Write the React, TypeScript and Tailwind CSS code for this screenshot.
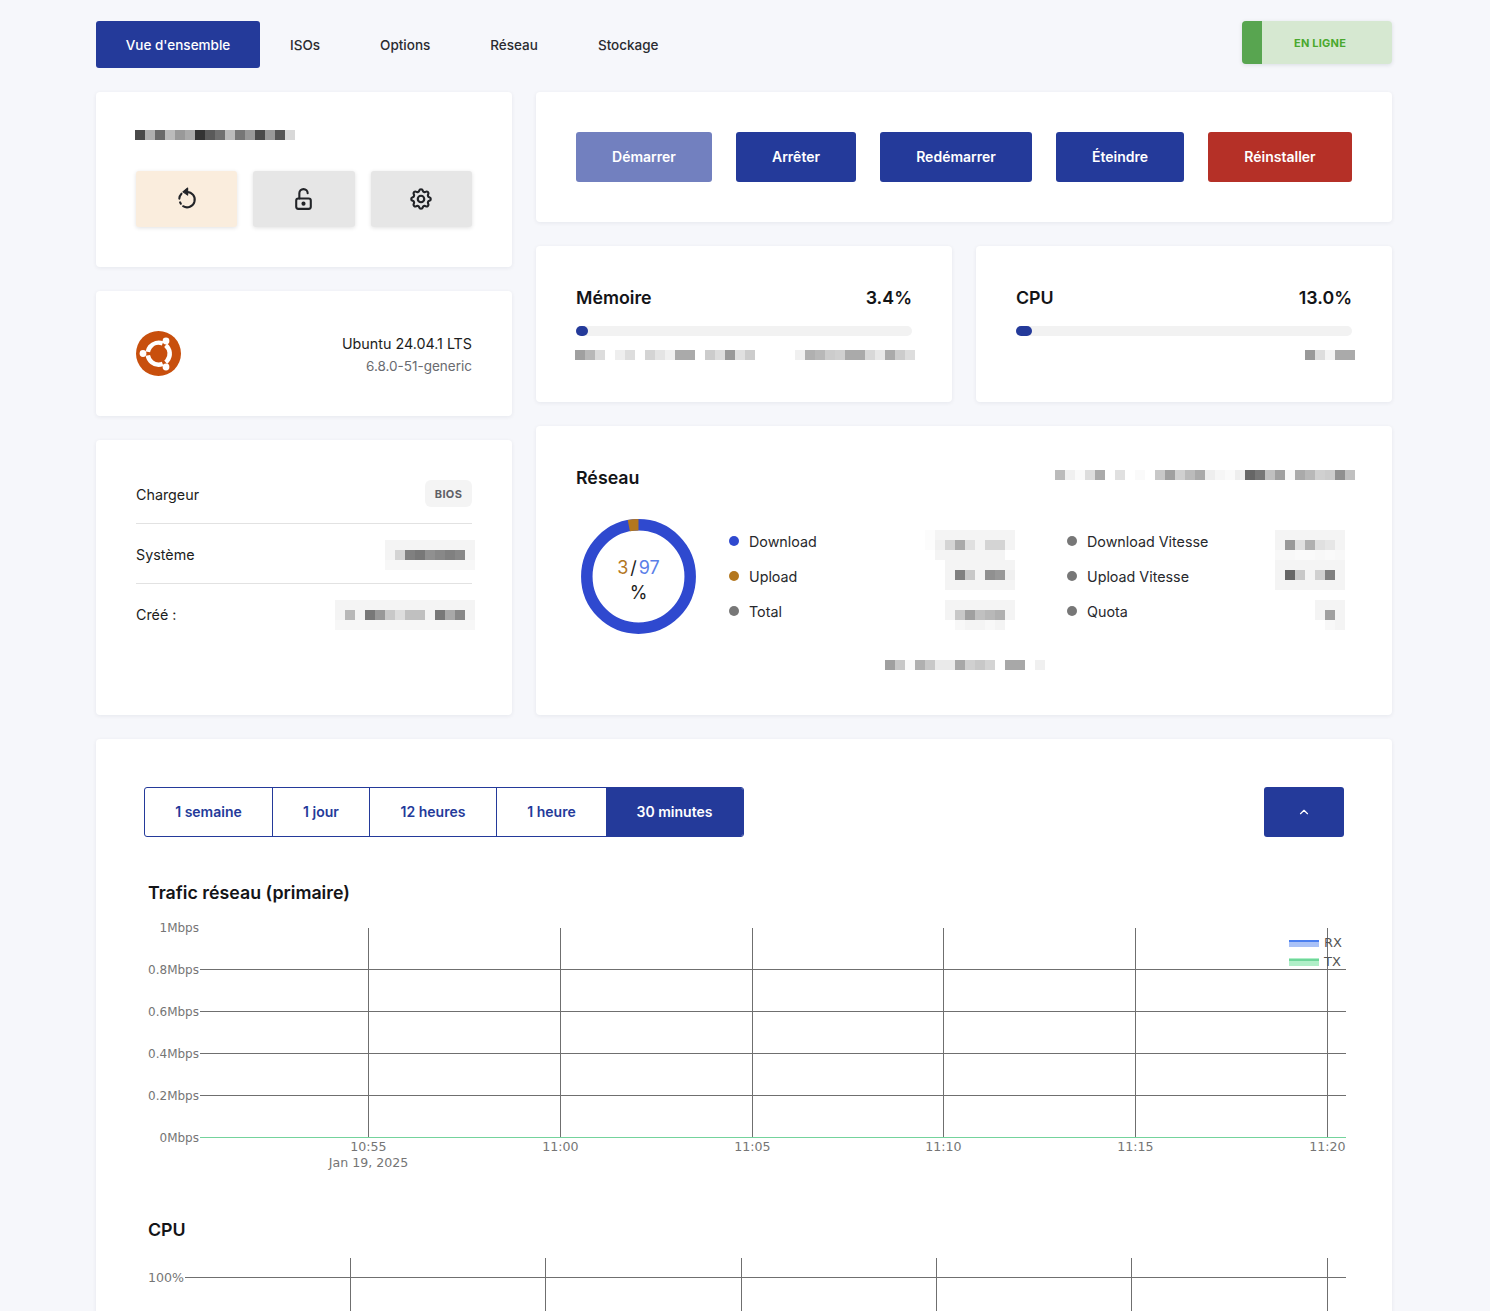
import { TbChevronUp, TbLockOpen, TbSettings } from "react-icons/tb";

// grey levels of the blurred-out values, one string per 10px row
const Mosaic = ({ rows, className = "" }: { rows: string[]; className?: string }) => (
  <div className={`flex flex-col shrink-0 ${className}`}>
    {rows.map((row, i) => (
      <div key={i} className="flex">
        {row.split(" ").map((level, j) => (
          <span key={j} className="h-2.5 w-2.5 shrink-0" style={{ backgroundColor: `#${level}${level}${level}` }} />
        ))}
      </div>
    ))}
  </div>
);

const Card = ({ className = "", children }: { className?: string; children: React.ReactNode }) => (
  <div className={`rounded-[4px] bg-white shadow-[0_1px_4px_rgba(20,30,60,0.07)] ${className}`}>{children}</div>
);

const tabs = ["ISOs", "Options", "Réseau", "Stockage"];

const actions = [
  { label: "Démarrer", cls: "w-[136px] bg-[#7280bf]" },
  { label: "Arrêter", cls: "w-[120px] bg-[#243a9a]" },
  { label: "Redémarrer", cls: "w-[152px] bg-[#243a9a]" },
  { label: "Éteindre", cls: "w-[128px] bg-[#243a9a]" },
  { label: "Réinstaller", cls: "w-[144px] bg-[#b53027]" },
];

const ranges = [
  { label: "1 semaine", cls: "w-[128px] border-r border-[#243a9a] text-[#243a9a]" },
  { label: "1 jour", cls: "w-[97px] border-r border-[#243a9a] text-[#243a9a]" },
  { label: "12 heures", cls: "w-[127px] border-r border-[#243a9a] text-[#243a9a]" },
  { label: "1 heure", cls: "w-[109px] text-[#243a9a]" },
  { label: "30 minutes", cls: "w-[137px] bg-[#243a9a] text-white" },
];

const Legend = ({ color, label, mosaic, top }: { color: string; label: string; mosaic: string[]; top: string }) => (
  <div className="flex h-[35px] items-center justify-between">
    <div className="flex items-center gap-2.5 text-[14.3px] text-[#27282c]">
      <span className={`mb-0.5 h-2.5 w-2.5 rounded-full ${color}`} />
      {label}
    </div>
    <Mosaic rows={mosaic} className={`self-start ${top}`} />
  </div>
);

const RestartIcon = () => (
  <svg width="26" height="26" viewBox="0 0 24 24" fill="none" stroke="#222428" strokeWidth="1.9" strokeLinecap="round" className="-mt-0.5">
    <path d="M12 6.4a7.1 7.1 0 1 1-3.6 13.2" />
    <path d="M6.3 17.3 5.6 16" />
    <path d="M4.9 12.6a7 7 0 0 1 2-4.6" />
    <path d="M12.6 2.8 8.2 6.3l4.4 3z" fill="#222428" strokeWidth="1" strokeLinejoin="round" />
  </svg>
);

const UbuntuLogo = () => (
  <svg width="45" height="45" viewBox="0 0 45 45" className="shrink-0">
    <circle cx="22.5" cy="22.5" r="22.5" fill="#c84f0d" />
    <circle
      cx="22.7"
      cy="22.7"
      r="11"
      fill="none"
      stroke="#ffffff"
      strokeWidth="4.5"
      pathLength="100"
      strokeDasharray="28.33 5"
      transform="rotate(-51 22.7 22.7)"
    />
    <circle cx="30" cy="10" r="3.4" fill="#ffffff" />
    <circle cx="7" cy="22.5" r="3.4" fill="#ffffff" />
    <circle cx="30" cy="36" r="3.4" fill="#ffffff" />
  </svg>
);

// page x of each tick, drawn as svg with the page's own coordinates
const trafficX = [
  { x: 368, t: "10:55" },
  { x: 560, t: "11:00" },
  { x: 752, t: "11:05" },
  { x: 943, t: "11:10" },
  { x: 1135, t: "11:15" },
  { x: 1327, t: "11:20" },
];
const trafficY = [
  { y: 969, t: "0.8Mbps" },
  { y: 1011, t: "0.6Mbps" },
  { y: 1053, t: "0.4Mbps" },
  { y: 1095, t: "0.2Mbps" },
];
const cpuX = [350, 545, 741, 936, 1131, 1327];

const TrafficChart = () => (
  <svg viewBox="144 907 1204 309" className="block h-[309px] w-[1204px] max-w-none font-['DejaVu_Sans',sans-serif] text-[12px]">
    {trafficX.map((v) => (
      <g key={v.x}>
        <line x1={v.x + 0.5} x2={v.x + 0.5} y1={928} y2={1137} stroke="#6f6f6f" />
        <text x={v.x + 0.5} y={1151} fontSize="12.6" textAnchor="middle" fill="#757575">{v.t}</text>
      </g>
    ))}
    {trafficY.map((v) => (
      <g key={v.y}>
        <line x1={200} x2={1346} y1={v.y + 0.5} y2={v.y + 0.5} stroke="#6f6f6f" />
        <text x={199} y={v.y + 5} textAnchor="end" fill="#757575">{v.t}</text>
      </g>
    ))}
    <line x1={200} x2={1346} y1={1137.5} y2={1137.5} stroke="#74d39c" />
    <text x={199} y={932} textAnchor="end" fill="#757575">1Mbps</text>
    <text x={199} y={1142} textAnchor="end" fill="#757575">0Mbps</text>
    <text x={368.5} y={1167} fontSize="12.6" textAnchor="middle" fill="#757575">Jan 19, 2025</text>
    <rect x={1289} y={940} width={30} height={7} fill="#a9c1f7" />
    <rect x={1289} y={940} width={30} height={2} fill="#4b7ff0" />
    <text x={1324} y={947} fontSize="13" fill="#555555">RX</text>
    <rect x={1289} y={958} width={30} height={8} fill="#b0efc8" />
    <rect x={1289} y={959} width={30} height={2} fill="#6fd69a" />
    <text x={1324} y={966} fontSize="13" fill="#555555">TX</text>
  </svg>
);

const CpuChart = () => (
  <svg viewBox="144 1244 1204 120" className="block h-[120px] w-[1204px] max-w-none font-['DejaVu_Sans',sans-serif] text-[12px]">
    {cpuX.map((x) => (
      <line key={x} x1={x + 0.5} x2={x + 0.5} y1={1258} y2={1364} stroke="#6f6f6f" />
    ))}
    <line x1={185} x2={1346} y1={1277.5} y2={1277.5} stroke="#6f6f6f" />
    <text x={184} y={1282} fontSize="12.6" textAnchor="end" fill="#757575">100%</text>
  </svg>
);

const Donut = () => (
  <div className="relative h-[115px] w-[115px] shrink-0">
    <svg viewBox="0 0 115 115" className="h-full w-full">
      <circle cx="57.5" cy="57.5" r="51.7" fill="none" stroke="#2f49cf" strokeWidth="11.5" />
      <circle
        cx="57.5"
        cy="57.5"
        r="51.7"
        fill="none"
        stroke="#b3771e"
        strokeWidth="11.5"
        pathLength="100"
        strokeDasharray="3 97"
        transform="rotate(-100.8 57.5 57.5)"
      />
    </svg>
    <div className="absolute inset-0 flex flex-col items-center justify-center pt-[7px]">
      <div className="flex items-center gap-[2px] text-lg leading-[25px] text-[#1c1d20]">
        <span className="text-[#b3771e]">3</span>/<span className="text-[#5b7fe8]">97</span>
      </div>
      <div className="text-lg leading-[25px] text-[#1c1d20]">%</div>
    </div>
  </div>
);

export default function App() {
  return (
    <div className="h-screen overflow-hidden bg-[#f6f7fb] pt-[21px] pr-[98px] pl-24 font-['Inter',sans-serif] text-[#1c1d20]">
      <div className="flex items-start justify-between">
        <div className="flex items-center text-[13.5px] font-medium">
          <div className="flex h-[47px] w-[164px] items-center justify-center rounded-[3px] bg-[#243a9a] pt-px text-white">Vue d'ensemble</div>
          {tabs.map((tab) => (
            <div key={tab} className="flex h-[47px] items-center px-[30px] pt-px text-[#2a2b30]">{tab}</div>
          ))}
        </div>
        <div className="flex h-[43px] w-[150px] overflow-hidden rounded-[4px] bg-[#d6e8d1] shadow-[0_1px_4px_rgba(20,30,60,0.12)]">
          <div className="w-5 bg-[#58a550]" />
          <div className="flex flex-1 items-center pt-px pl-8 text-[11px] font-bold tracking-[0.02em] text-[#4aa82e]">EN LIGNE</div>
        </div>
      </div>

      <div className="mt-[24px] flex gap-6">
        <div className="flex w-[416px] shrink-0 flex-col gap-6">
          <Card className="h-[175px] px-10 pt-[38px]">
            <Mosaic className="-ml-px" rows={["4a b0 6a bb 99 aa 33 5a 70 bb 77 99 4a 99 55 d8"]} />
            <div className="mt-[31px] flex gap-4">
              <div className="flex h-14 flex-1 items-center justify-center rounded-[3px] bg-[#faeddd] shadow-[0_1px_4px_rgba(0,0,0,0.12)]"><RestartIcon /></div>
              <div className="flex h-14 flex-1 items-center justify-center rounded-[3px] bg-[#e6e6e6] shadow-[0_1px_4px_rgba(0,0,0,0.12)]"><TbLockOpen size={25} color="#222428" /></div>
              <div className="flex h-14 flex-1 items-center justify-center rounded-[3px] bg-[#e6e6e6] shadow-[0_1px_4px_rgba(0,0,0,0.12)]"><TbSettings size={26} color="#222428" /></div>
            </div>
          </Card>

          <Card className="flex h-[125px] items-center justify-between px-10">
            <UbuntuLogo />
            <div className="pt-0.5 text-right">
              <div className="text-[14.3px] leading-[22px]">Ubuntu 24.04.1 LTS</div>
              <div className="text-[13.5px] leading-[22px] text-[#6a6b70]">6.8.0-51-generic</div>
            </div>
          </Card>

          <Card className="h-[275px] px-10 pt-6">
            <div className="flex h-[60px] items-center justify-between border-b border-[#e2e2e2] text-[14.3px]">
              <span className="pt-[3px]">Chargeur</span>
              <span className="flex h-[27px] w-[47px] items-center justify-center rounded-md bg-[#f4f4f4] pt-px text-[11px] font-bold tracking-[0.03em] text-[#5f6066]">BIOS</span>
            </div>
            <div className="flex h-[60px] items-center justify-between border-b border-[#e2e2e2] pt-0.5 text-[14.3px]">
              Système
              <Mosaic
                className="-mr-[3px]"
                rows={["f4 f4 f4 f4 f4 f4 f4 f4 f4", "f4 d4 80 78 90 88 80 88 f4", "f7 f7 f7 f7 f7 f7 f7 f7 f7"]}
              />
            </div>
            <div className="flex h-[60px] items-center justify-between pt-0.5 text-[14.3px]">
              Créé :
              <Mosaic
                className="-mr-[3px]"
                rows={[
                  "f4 f4 f4 f4 f4 f4 f4 f4 f4 f4 f4 f4 f4 f4",
                  "f4 b8 f4 78 98 c8 dd c0 c0 f4 78 a8 88 f4",
                  "f7 f7 f7 f7 f7 f7 f7 f7 f7 f7 f7 f7 f7 f7",
                ]}
              />
            </div>
          </Card>
        </div>

        <div className="flex min-w-0 flex-1 flex-col gap-6">
          <Card className="flex h-[130px] items-center gap-6 px-10">
            {actions.map((a) => (
              <div key={a.label} className={`flex h-[50px] items-center justify-center rounded-[3px] text-sm font-semibold text-white ${a.cls}`}>
                {a.label}
              </div>
            ))}
          </Card>

          <div className="grid grid-cols-2 gap-6">
            <Card className="h-[156px] px-10 pt-10">
              <div className="flex h-6 items-center justify-between text-[17.8px] font-semibold text-[#131417]">
                <span>Mémoire</span>
                <span>3.4%</span>
              </div>
              <div className="mt-4 h-2.5 rounded-full bg-[#f2f2f2]">
                <div className="h-full w-3 rounded-full bg-[#243a9a]" />
              </div>
              <Mosaic
                className="mt-[14px] -ml-px"
                rows={["a0 b8 dc ff ee dd ff d4 e4 f0 aa aa ff cc dd 99 e0 cc ff ff ff ff f0 b0 b8 cc d0 aa aa d8 e8 aa cc dd"]}
              />
            </Card>
            <Card className="h-[156px] px-10 pt-10">
              <div className="flex h-6 items-center justify-between text-[17.8px] font-semibold text-[#131417]">
                <span>CPU</span>
                <span>13.0%</span>
              </div>
              <div className="mt-4 h-2.5 rounded-full bg-[#f2f2f2]">
                <div className="h-full w-4 rounded-full bg-[#243a9a]" />
              </div>
              <div className="mt-[14px] -mr-[3px] flex justify-end">
                <Mosaic rows={["99 dd f4 aa aa"]} />
              </div>
            </Card>
          </div>

          <Card className="h-[289px] px-10 pt-10">
            <div className="flex h-6 items-center justify-between">
              <span className="text-[17.8px] font-semibold text-[#131417]">Réseau</span>
              <Mosaic
                className="-mt-1.5 -mr-[3px]"
                rows={["bb f0 fa dd aa ff e0 ff fa ff c8 a0 d0 bb aa ee f6 fa ee 66 77 c0 a0 f8 aa b8 d0 cc 90 c0"]}
              />
            </div>
            <div className="mt-[29px] flex items-start pl-[5px]">
              <Donut />
              <div className="mt-[5px] ml-[33px] flex w-[286px] flex-col">
                <Legend
                  color="bg-[#2f49cf]"
                  label="Download"
                  top="mt-1.5"
                  mosaic={["fc f4 f4 f4 f4 f4 f4 f4 f4", "fc f0 d4 aa e0 f4 d4 d4 f4", "ff f4 f4 f4 f4 f4 f4 f4 ff"]}
                />
                <Legend color="bg-[#b3771e]" label="Upload" top="mt-px" mosaic={["f4 f4 f4 f4 f4 f4 f4", "f4 80 c8 f4 90 98 f0", "f4 f4 f4 f4 f4 f4 f4"]} />
                <Legend color="bg-[#777777]" label="Total" top="mt-1.5" mosaic={["f4 f4 f4 f4 f4 f4 f4", "f4 c8 a0 c0 b8 b0 f4", "ff f8 f4 f4 f8 f4 ff"]} />
              </div>
              <div className="mt-[5px] ml-[52px] flex w-[278px] flex-col">
                <Legend color="bg-[#777777]" label="Download Vitesse" top="mt-1.5" mosaic={["f4 f4 f4 f4 f4 f4 f4", "f4 99 e0 b0 e0 e6 f4", "f8 f8 fa fa f8 fa f8"]} />
                <Legend color="bg-[#777777]" label="Upload Vitesse" top="mt-px" mosaic={["f4 f4 f4 f4 f4 f4 f4", "f4 66 c8 f4 d0 80 f4", "f4 f4 f4 f4 f4 f4 f4"]} />
                <Legend color="bg-[#777777]" label="Quota" top="mt-1.5" mosaic={["f4 f4 f4", "f4 a0 f4", "ff f8 f4"]} />
              </div>
            </div>
            <div className="mt-[26px] -mr-0.5 flex justify-center">
              <Mosaic rows={["a0 c8 fa b0 c8 ea ea a8 d0 c8 d4 ff a8 a8 ff f0"]} />
            </div>
          </Card>
        </div>
      </div>

      <Card className="mt-6 px-12 pt-12 pb-10">
        <div className="flex items-center justify-between">
          <div className="flex h-[50px] w-[600px] overflow-hidden rounded-[3px] border border-[#243a9a] text-sm font-semibold">
            {ranges.map((r) => (
              <div key={r.label} className={`flex items-center justify-center ${r.cls}`}>{r.label}</div>
            ))}
          </div>
          <div className="flex h-[50px] w-20 items-center justify-center rounded-[3px] bg-[#243a9a]">
            <TbChevronUp size={14} color="#ffffff" />
          </div>
        </div>
        <h2 className="mt-[42px] h-7 pl-1 text-[17.8px] leading-7 font-semibold text-[#131417]">Trafic réseau (primaire)</h2>
        <TrafficChart />
        <h2 className="h-7 pl-1 text-[17.8px] leading-7 font-semibold text-[#131417]">CPU</h2>
        <CpuChart />
      </Card>
    </div>
  );
}
